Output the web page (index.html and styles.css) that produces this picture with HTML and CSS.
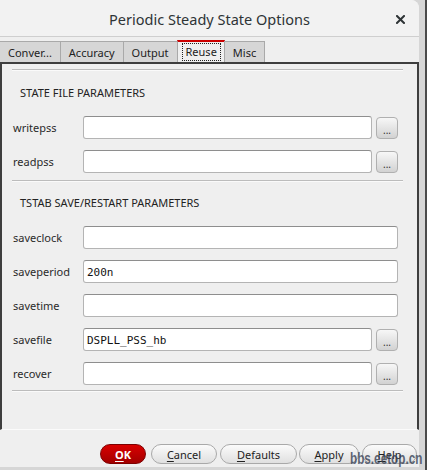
FILE: index.html
```html
<!DOCTYPE html>
<html>
<head>
<meta charset="utf-8">
<link rel="stylesheet" href="styles.css">
</head>
<body>
<div class="window">
  <header class="titlebar">
    <span></span>
    <span class="title">Periodic Steady State Options</span>
    <span class="close"><svg width="9" height="9" viewBox="0 0 9 9"><path d="M1 1L8 8M8 1L1 8" stroke="#2e3436" stroke-width="2" stroke-linecap="square"/></svg></span>
  </header>
  <nav class="tabs">
    <div class="tab first">Conver...</div>
    <div class="tab">Accuracy</div>
    <div class="tab">Output</div>
    <div class="tab active"><span class="focus">Reuse</span></div>
    <div class="tab">Misc</div>
  </nav>
  <main class="panel">
    <div class="sep sep-top"></div>
    <h3 class="section">STATE FILE PARAMETERS</h3>
    <div class="row"><label>writepss</label><input class="field" type="text" value=""><button class="browse">...</button></div>
    <div class="row"><label>readpss</label><input class="field" type="text" value=""><button class="browse">...</button></div>
    <div class="sep sep-mid"></div>
    <h3 class="section section-2">TSTAB SAVE/RESTART PARAMETERS</h3>
    <div class="row"><label>saveclock</label><input class="field" type="text" value=""></div>
    <div class="row"><label>saveperiod</label><input class="field" type="text" value="200n"></div>
    <div class="row"><label>savetime</label><input class="field" type="text" value=""></div>
    <div class="row"><label>savefile</label><input class="field" type="text" value="DSPLL_PSS_hb"><button class="browse">...</button></div>
    <div class="row"><label>recover</label><input class="field" type="text" value=""><button class="browse">...</button></div>
    <div class="sep sep-bot"></div>
  </main>
  <footer class="actions">
    <button class="btn ok"><u>O</u>K</button>
    <button class="btn cancel"><u>C</u>ancel</button>
    <button class="btn defaults"><u>D</u>efaults</button>
    <button class="btn apply"><u>A</u>pply</button>
    <button class="btn help"><u>H</u>elp</button>
  </footer>
</div>
<div class="watermark">bbs.eetop.cn</div>
</body>
</html>
```
FILE: styles.css
```css
html, body {
  margin: 0;
  height: 100%;
}
body {
  background: linear-gradient(to right, #d6d6d6 0 425px, #4a4a4a 425px);
  font-family: "Noto Sans", "Open Sans", sans-serif;
  overflow: hidden;
  position: relative;
}
.window {
  width: 419px;
  height: 467px;
  background: #efefef;
  border-top-right-radius: 8px;
  display: flex;
  flex-direction: column;
}
.titlebar {
  height: 36px;
  border-bottom: 1px solid #cfcfcf;
  background: #f2f2f2;
  border-top-right-radius: 8px;
  display: grid;
  grid-template-columns: 1fr auto 1fr;
  align-items: center;
}
.title {
  font-size: 14.5px;
  color: #2e3436;
  padding-top: 1px;
}
.close {
  justify-self: end;
  margin-right: 14px;
  display: flex;
  padding-top: 2px;
}
.tabs {
  display: flex;
  align-items: flex-end;
  height: 22px;
  padding-top: 3px;
}
.tab {
  box-sizing: border-box;
  height: 21px;
  border: 1px solid #a9a9a9;
  border-bottom: 0;
  background: #d6d6d6;
  padding: 1px 8px 0;
  font-size: 11px;
  line-height: 19px;
  color: #222;
  margin-left: -1px;
}
.tab.first {
  margin-left: 0;
  border-left: 0;
}
.tab.active {
  height: 22px;
  border-top: 2px solid #cc0000;
  background: #efefef;
  padding: 1px 3px 0 4px;
  line-height: 16px;
}
.focus {
  display: inline-block;
  border: 1px dotted #222;
  padding: 0 3px;
  line-height: 16px;
}
.panel {
  box-sizing: border-box;
  height: 368px;
  border: 2px solid #3e3e3e;
  border-bottom: 1px solid #fbfbfb;
  background: #efefef;
  display: flex;
  flex-direction: column;
}
.sep {
  height: 1px;
  background: #bcbcbc;
  border-bottom: 1px solid #fafafa;
  margin: 0 14px 0 10px;
}
.sep-top { margin-top: 5px; }
.sep-mid { margin-top: 7px; }
.sep-bot { margin-top: 5px; }
.section {
  margin: 14px 0 15px 18px;
  font-size: 11px;
  line-height: 16px;
  font-weight: normal;
  color: #222;
}
.section-2 {
  margin-top: 13px;
}
.row {
  display: flex;
  align-items: center;
  height: 23px;
  padding: 0 19px 0 11px;
}
.row + .row {
  margin-top: 11px;
}
.row label {
  width: 70px;
  font-size: 11px;
  color: #2a2a2a;
}
.field {
  flex: 1;
  min-width: 0;
  box-sizing: border-box;
  height: 23px;
  margin: 0;
  border: 1px solid #b4b4b4;
  border-top-color: #8e8e8e;
  border-radius: 3px;
  background: #fff;
  padding: 1px 3px 0;
  font-family: "DejaVu Sans Mono", monospace;
  font-size: 11px;
  color: #111;
  outline: none;
}
.browse {
  box-sizing: border-box;
  width: 22px;
  height: 22px;
  margin: 0 0 0 4px;
  padding: 0 0 3px;
  border: 1px solid #b0b0b0;
  border-radius: 4px;
  background: linear-gradient(#f7f7f7, #d2d2d2);
  font-family: "Noto Sans", sans-serif;
  font-size: 10px;
  line-height: 1;
  color: #333;
  display: flex;
  align-items: flex-end;
  justify-content: center;
}
.actions {
  display: flex;
  justify-content: flex-end;
  gap: 3px;
  padding: 14px 2px 0 0;
}
.btn {
  box-sizing: border-box;
  height: 20px;
  margin: 0;
  padding: 0;
  border: 1px solid #a9a9a9;
  border-radius: 10px;
  background: linear-gradient(#fbfbfb, #e0e0e0);
  font-family: "Noto Sans", sans-serif;
  font-size: 11px;
  color: #222;
}
.btn u { text-underline-offset: 2px; }
.ok {
  width: 46px;
  margin-right: 2px;
  border-color: #7d0000;
  background: linear-gradient(#d90000, #a30000);
  color: #fff;
  font-weight: bold;
}
.cancel { width: 66px; }
.defaults { width: 77px; }
.apply { width: 60px; margin-left: -1px; }
.help { width: 55px; }
.watermark {
  position: absolute;
  left: 350px;
  top: 450px;
  font-family: "Liberation Sans", sans-serif;
  font-weight: bold;
  font-size: 17px;
  line-height: 17px;
  white-space: nowrap;
  transform: scaleX(0.69);
  transform-origin: left top;
  color: rgba(58, 68, 88, 0.82);
}
```
